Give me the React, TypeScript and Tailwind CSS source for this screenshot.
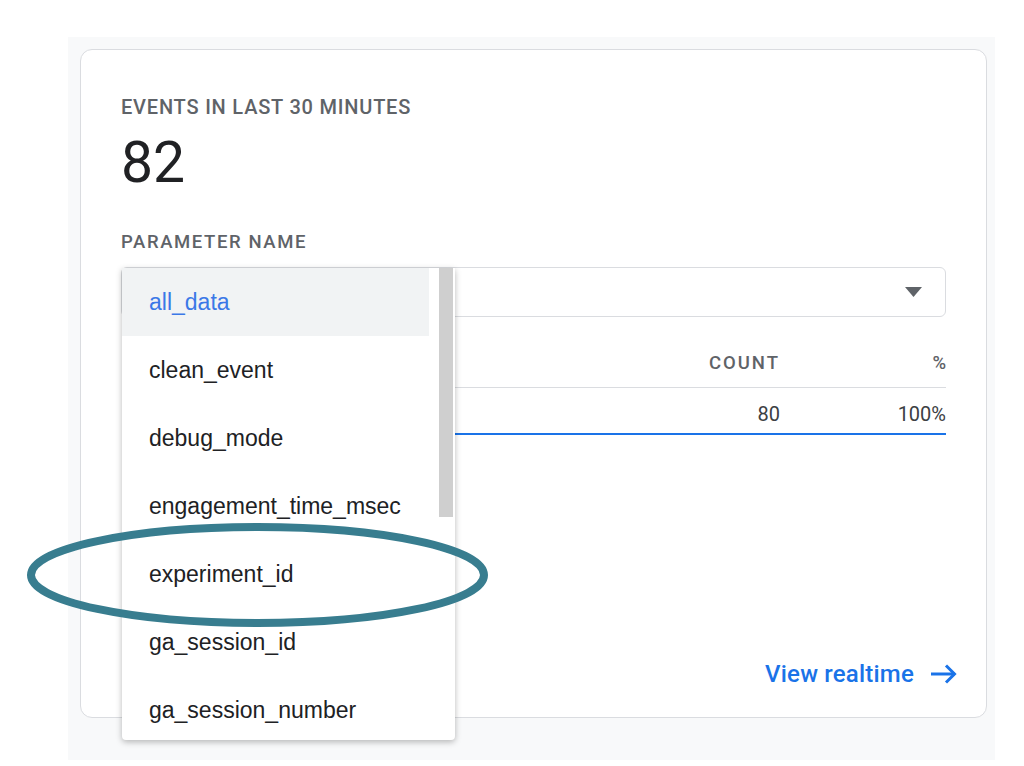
import React from 'react'

const PARAMS = [
  'all_data',
  'clean_event',
  'debug_mode',
  'engagement_time_msec',
  'experiment_id',
  'ga_session_id',
  'ga_session_number',
]

const label = "font-['Roboto',sans-serif] font-medium text-[#5f6368] uppercase"

const ParamMenu = () => {
  return (
    <div className="absolute top-[1px] left-[1px] w-[333px] h-[472px] bg-white rounded-b-[4px] shadow-[0_2px_6px_rgba(0,0,0,0.28)] flex overflow-hidden z-10">
      <ul className="w-[307px] font-['Liberation_Sans',Arial,sans-serif] text-[23px]">
        {PARAMS.map((p, i) => (
          <li
            key={p}
            className={
              i === 0
                ? 'h-[68px] flex items-center pl-[27px] bg-[#f1f3f4] text-[#3b78e7]'
                : 'h-[68px] flex items-center pl-[27px] text-[#202124]'
            }
          >
            {p}
          </li>
        ))}
      </ul>
      <div className="w-[26px] pl-[10px]">
        <div className="w-[14px] h-[249px] bg-[#cfcfcf]" />
      </div>
    </div>
  )
}

const App = () => {
  return (
    <div className="relative w-[1024px] h-[766px] bg-white pl-[68px] pt-[37px] overflow-hidden">
      <div className="w-[927px] h-[723px] bg-[#f8f9fa] pt-3 pl-3 pr-2">
        <div className="h-[669px] bg-white border border-[#dadce0] rounded-[12px] flex flex-col px-[40px] pt-[45px] pb-[27px]">
          <p className={`${label} text-[20px] leading-[24px] tracking-[0.8px]`}>Events in last 30 minutes</p>
          <p className="mt-[15px] font-['Roboto',sans-serif] text-[57px] leading-[57px] text-[#202124]">82</p>

          <p className={`${label} mt-[39px] text-[18.5px] leading-[24px] tracking-[1.6px]`}>Parameter name</p>
          <div className="relative mt-[13px]">
            <div className="h-[50px] border border-[#dadce0] rounded-[6px] flex items-center justify-end pr-[23px]">
              <svg width="17" height="10" viewBox="0 0 17 10">
                <polygon points="0,0 17,0 8.5,10" fill="#5f6368" />
              </svg>
            </div>
            <ParamMenu />
          </div>

          <div className="mt-[34px] ml-[3px]">
            <div className="grid grid-cols-[1fr_120px_166px] border-b border-[#dadce0] pb-[12px]">
              <span />
              <span className={`${label} text-right text-[18.5px] leading-[24px] tracking-[2px]`}>Count</span>
              <span className={`${label} text-right text-[18.5px] leading-[24px]`}>%</span>
            </div>
            <div className="grid grid-cols-[1fr_120px_166px] pt-[14px] pb-[7px] font-['Roboto',sans-serif] text-[20px] leading-[24px] text-[#3c4043]">
              <span />
              <span className="text-right">80</span>
              <span className="text-right">100%</span>
            </div>
            <div className="h-[2px] bg-[#1a73e8]" />
          </div>

          <div className="mt-auto flex justify-end items-center gap-[16px] -mr-[11px]">
            <span className="font-['Roboto',sans-serif] font-medium text-[24px] leading-[32px] text-[#1a73e8] tracking-[0.2px]">
              View realtime
            </span>
            <svg width="27" height="20" viewBox="0 0 27 20" fill="none" stroke="#1a73e8" strokeWidth="3">
              <line x1="1" y1="10" x2="25" y2="10" />
              <polyline points="16,1.5 24.5,10 16,18.5" />
            </svg>
          </div>
        </div>
      </div>

      <svg className="absolute left-0 top-0 pointer-events-none z-20" width="1024" height="766">
        <ellipse cx="257.5" cy="575" rx="226.5" ry="48" fill="none" stroke="#387d8f" strokeWidth="8" />
      </svg>
    </div>
  )
}

export default App
